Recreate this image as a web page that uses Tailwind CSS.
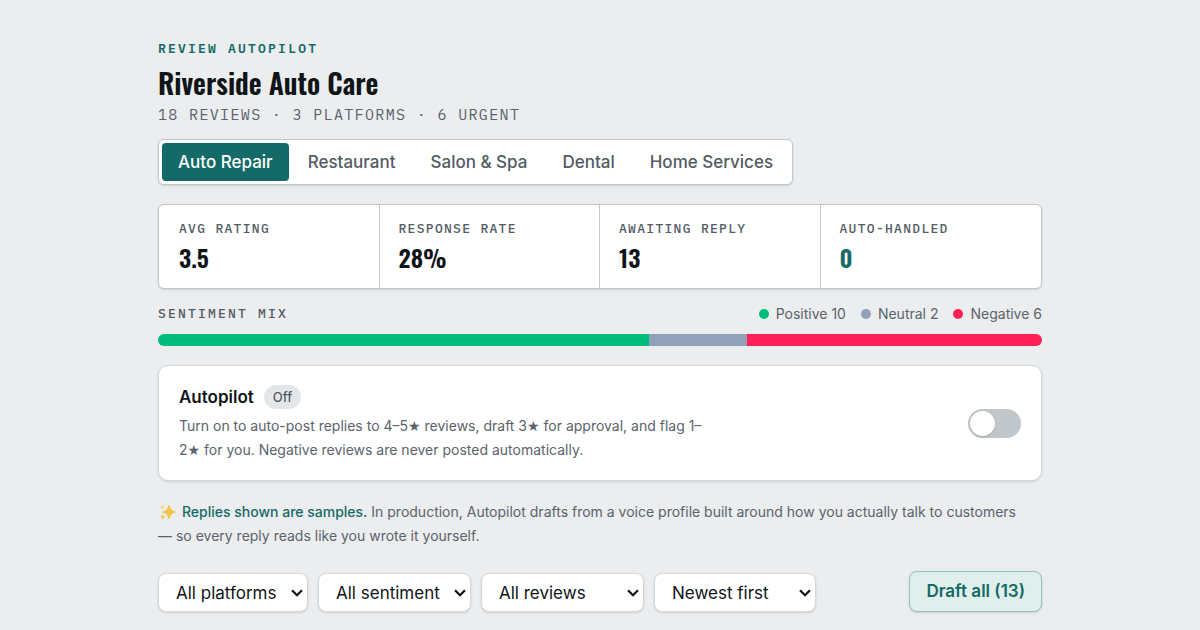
<!DOCTYPE html>
<html lang="en">
<head>
    <meta charset="UTF-8">
    <meta name="viewport" content="width=device-width, initial-scale=1.0">
    <title>Review Autopilot</title>
    <script src="https://cdn.jsdelivr.net/npm/@tailwindcss/browser@4"></script>
</head>
<body class="bg-[#ebedef] text-[#0f1417] font-['Inter',sans-serif] antialiased">
    <main class="max-w-[884px] mx-auto pt-[39px] pb-10">

        <header>
            <p class="font-['IBM_Plex_Mono','Liberation_Mono',monospace] text-[13px] leading-5 font-semibold tracking-[0.17em] text-[#146a66]">REVIEW AUTOPILOT</p>
            <h1 class="font-['Oswald','Liberation_Sans_Narrow',sans-serif] text-[28px] leading-[38px] font-semibold mt-[5px]">Riverside Auto Care</h1>
            <p class="font-['IBM_Plex_Mono','Liberation_Mono',monospace] text-[15px] leading-6 tracking-[0.09em] text-[#5b636c] mt-px">18 REVIEWS · 3 PLATFORMS · 6 URGENT</p>
        </header>

        <nav class="flex w-fit gap-[3px] p-[3px] mt-3 bg-white border border-[#c3c7cb] rounded-md shadow-sm text-[17px] leading-[38px] font-medium text-[#535b64]">
            <button class="px-4 rounded bg-[#146a66] text-white">Auto Repair</button>
            <button class="px-4 rounded">Restaurant</button>
            <button class="px-4 rounded">Salon &amp; Spa</button>
            <button class="px-4 rounded">Dental</button>
            <button class="px-4 rounded">Home Services</button>
        </nav>

        <dl class="grid grid-cols-4 divide-x divide-[#c3c7cb] mt-[19px] bg-white border border-[#c3c7cb] rounded-md shadow-sm">
            <div class="px-5 pt-[14px] pb-[13px]">
                <dt class="font-['IBM_Plex_Mono','Liberation_Mono',monospace] text-[13px] leading-5 font-medium tracking-widest text-[#535b64]">AVG RATING</dt>
                <dd class="font-['Oswald','Liberation_Sans_Narrow',sans-serif] text-[24px] leading-9 font-semibold">3.5</dd>
            </div>
            <div class="px-[19px] pt-[14px] pb-[13px]">
                <dt class="font-['IBM_Plex_Mono','Liberation_Mono',monospace] text-[13px] leading-5 font-medium tracking-widest text-[#535b64]">RESPONSE RATE</dt>
                <dd class="font-['Oswald','Liberation_Sans_Narrow',sans-serif] text-[24px] leading-9 font-semibold">28%</dd>
            </div>
            <div class="px-[19px] pt-[14px] pb-[13px]">
                <dt class="font-['IBM_Plex_Mono','Liberation_Mono',monospace] text-[13px] leading-5 font-medium tracking-widest text-[#535b64]">AWAITING REPLY</dt>
                <dd class="font-['Oswald','Liberation_Sans_Narrow',sans-serif] text-[24px] leading-9 font-semibold">13</dd>
            </div>
            <div class="px-[19px] pt-[14px] pb-[13px]">
                <dt class="font-['IBM_Plex_Mono','Liberation_Mono',monospace] text-[13px] leading-5 font-medium tracking-widest text-[#535b64]">AUTO-HANDLED</dt>
                <dd class="font-['Oswald','Liberation_Sans_Narrow',sans-serif] text-[24px] leading-9 font-semibold text-[#146a66]">0</dd>
            </div>
        </dl>

        <section class="mt-[15px]">
            <div class="flex items-center justify-between">
                <h2 class="font-['IBM_Plex_Mono','Liberation_Mono',monospace] text-[13px] leading-5 font-medium tracking-[0.17em] text-[#535b64]">SENTIMENT MIX</h2>
                <ul class="flex gap-[15px] text-[14px] leading-5 text-[#5b636c]">
                    <li class="flex items-center gap-[7px]"><span class="size-[10px] rounded-full bg-[#00bc7d]"></span>Positive 10</li>
                    <li class="flex items-center gap-[7px]"><span class="size-[10px] rounded-full bg-[#90a1b9]"></span>Neutral 2</li>
                    <li class="flex items-center gap-[7px]"><span class="size-[10px] rounded-full bg-[#ff2056]"></span>Negative 6</li>
                </ul>
            </div>
            <div class="flex h-3 mt-[10px] rounded-full overflow-hidden">
                <div class="bg-[#00bc7d]" style="width: 55.56%"></div>
                <div class="bg-[#90a1b9]" style="width: 11.11%"></div>
                <div class="bg-[#ff2056]" style="width: 33.33%"></div>
            </div>
        </section>

        <section class="flex items-center justify-between mt-[19px] px-5 pt-[19px] pb-[18px] bg-white border border-[#d5d8db] rounded-[10px] shadow-sm">
            <div class="max-w-[538px]">
                <div class="flex items-center gap-[10px]">
                    <label for="autopilot" class="text-[17px] leading-6 font-semibold">Autopilot</label>
                    <span class="px-[9px] rounded-full bg-[#e4e7ea] text-[13px] leading-6 font-medium text-[#535b64]">Off</span>
                </div>
                <p class="mt-[5px] text-[14px] leading-6 text-[#5b636c]">Turn on to auto-post replies to 4–5<span class="font-['DejaVu_Sans',sans-serif]">★</span> reviews, draft 3<span class="font-['DejaVu_Sans',sans-serif]">★</span> for approval, and flag 1–2<span class="font-['DejaVu_Sans',sans-serif]">★</span> for you. Negative reviews are never posted automatically.</p>
            </div>
            <input type="checkbox" role="switch" id="autopilot" class="appearance-none flex items-center shrink-0 w-[53px] h-[29px] px-[2px] rounded-full bg-[#c1c6ca] before:size-[25px] before:rounded-full before:bg-white before:shadow-sm checked:justify-end checked:bg-[#146a66]">
        </section>

        <p class="mt-[19px] pr-3 text-[14px] leading-6 text-[#5b636c]">
            <svg class="inline size-[18px] mr-[2px] align-[-4px]" viewBox="0 0 18 18" fill="#f6c445" aria-hidden="true">
                <path d="M11 2.200c1 3.900 2.500 5.800 6.300 6.800-3.800 1-5.300 2.900-6.300 6.800-1-3.900-2.500-5.800-6.300-6.800 3.800-1 5.300-2.900 6.300-6.800z" stroke="#f6c445" stroke-linejoin="round"/>
                <path d="M4.700 11c.4 1.900 1 2.500 2.600 2.900-1.600.4-2.200 1-2.600 2.900-.4-1.900-1-2.500-2.600-2.900 1.600-.4 2.200-1 2.600-2.900z"/>
                <path d="M4.200 2c.3 1.400.7 1.900 2 2.200-1.300.3-1.700.8-2 2.200-.3-1.400-.7-1.900-2-2.200 1.300-.3 1.700-.8 2-2.200z"/>
            </svg>
            <strong class="font-medium text-[#146a66]">Replies shown are samples.</strong> In production, Autopilot drafts from a voice profile built around how you actually talk to customers — so every reply reads like you wrote it yourself.
        </p>

        <div class="flex items-end justify-between mt-[23px]">
            <div class="flex gap-[10px] text-[17px]">
                <div class="relative">
                    <select aria-label="Platform" class="appearance-none w-[150px] h-[39px] pl-[17px] pt-[2px] bg-white border border-[#d5d8db] rounded-lg shadow-sm">
                        <option>All platforms</option>
                    </select>
                    <svg class="absolute right-[5px] top-4 w-3 h-2 pointer-events-none" viewBox="0 0 12 8" fill="none" stroke="#0f1417" stroke-width="2.300" aria-hidden="true"><path d="M1 1.200l5 5 5-5"/></svg>
                </div>
                <div class="relative">
                    <select aria-label="Sentiment" class="appearance-none w-[153px] h-[39px] pl-[17px] pt-[2px] bg-white border border-[#d5d8db] rounded-lg shadow-sm">
                        <option>All sentiment</option>
                    </select>
                    <svg class="absolute right-[5px] top-4 w-3 h-2 pointer-events-none" viewBox="0 0 12 8" fill="none" stroke="#0f1417" stroke-width="2.300" aria-hidden="true"><path d="M1 1.200l5 5 5-5"/></svg>
                </div>
                <div class="relative">
                    <select aria-label="Reviews" class="appearance-none w-[163px] h-[39px] pl-[17px] pt-[2px] bg-white border border-[#d5d8db] rounded-lg shadow-sm">
                        <option>All reviews</option>
                    </select>
                    <svg class="absolute right-[5px] top-4 w-3 h-2 pointer-events-none" viewBox="0 0 12 8" fill="none" stroke="#0f1417" stroke-width="2.300" aria-hidden="true"><path d="M1 1.200l5 5 5-5"/></svg>
                </div>
                <div class="relative">
                    <select aria-label="Sort order" class="appearance-none w-[162px] h-[39px] pl-[17px] pt-[2px] bg-white border border-[#d5d8db] rounded-lg shadow-sm">
                        <option>Newest first</option>
                    </select>
                    <svg class="absolute right-[5px] top-4 w-3 h-2 pointer-events-none" viewBox="0 0 12 8" fill="none" stroke="#0f1417" stroke-width="2.300" aria-hidden="true"><path d="M1 1.200l5 5 5-5"/></svg>
                </div>
            </div>
            <button class="h-[41px] px-4 bg-[#e0efeb] border border-[#8cc7bb] rounded-lg shadow-sm text-[17px] font-semibold text-[#146a66]">Draft all (13)</button>
        </div>

    </main>
</body>
</html>
